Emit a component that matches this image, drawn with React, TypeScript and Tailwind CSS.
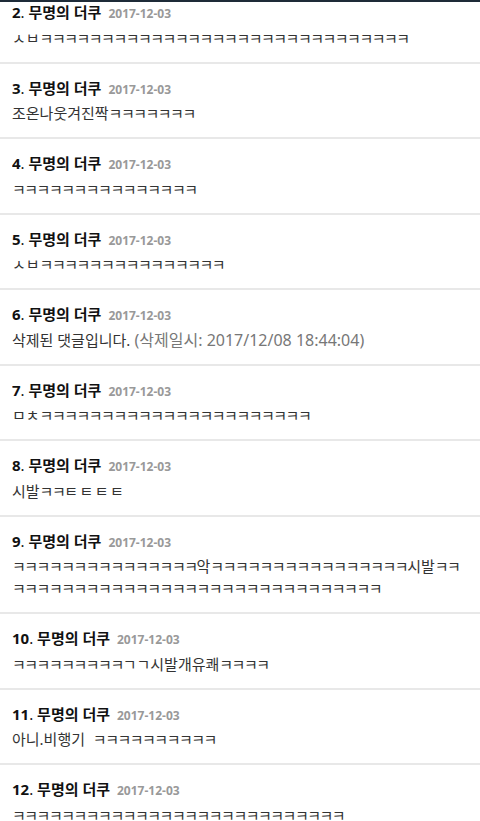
const k = (n: number) => "ㅋ".repeat(n);

const comments = [
  { no: 2, body: "ㅅㅂ" + k(30) },
  { no: 3, body: "조온나웃겨진짝" + k(7) },
  { no: 4, body: k(15) },
  { no: 5, body: "ㅅㅂ" + k(15) },
  { no: 6, body: "삭제된 댓글입니다.", deleted: "(삭제일시: 2017/12/08 18:44:04)" },
  { no: 7, body: "ㅁㅊ" + k(22) },
  { no: 8, body: "시발ㅋㅋㅌㅌㅌㅌ" },
  { no: 9, body: k(15) + "악" + k(16) + "시발ㅋㅋ\n" + k(30) },
  { no: 10, body: k(9) + "ㄱㄱ시발개유쾌" + k(4) },
  { no: 11, body: "아니.비행기  " + k(10) },
  { no: 12, body: k(27) },
];

// jamo widths differ from the original font: ㅋ narrower, ㅌ wider
const renderBody = (text: string) =>
  text.split(/(ㅋ+|ㅌ+)/).map((part, i) =>
    part.startsWith("ㅋ") ? (
      <span key={i} className="tracking-[-1.5px]">
        {part}
      </span>
    ) : part.startsWith("ㅌ") ? (
      <span key={i} className="tracking-[1.5px]">
        {part}
      </span>
    ) : (
      part
    )
  );

export default function App() {
  return (
    <div
      className="h-[821px] w-[480px] overflow-hidden bg-white"
      style={{ fontFamily: '"Noto Sans", "Noto Sans CJK KR", sans-serif' }}
    >
      <div className="h-[2px] bg-[#1e2b38]"></div>
      <ul className="-mt-[14px]">
        {comments.map((c) => (
          <li key={c.no} className="border-b-2 border-[#e8e8e8] px-3 pt-[12px] pb-[13px]">
            <div className="flex h-[24px] items-baseline overflow-hidden leading-[24px]">
              <span className="text-[15px] text-[#111]">
                <b>{c.no}</b>. <b>무명의 더쿠</b>
              </span>
              <span
                className="ml-[7px] text-[12px] font-bold text-[#999]"
                style={{ fontFamily: '"Open Sans", sans-serif' }}
              >
                2017-12-03
              </span>
            </div>
            <p className="mt-[2.5px] whitespace-pre-wrap break-all text-[15px] leading-[22px] text-[#333]">
              {renderBody(c.body)}
              {c.deleted && <span className="text-[16px] text-[#777]"> {c.deleted}</span>}
            </p>
          </li>
        ))}
      </ul>
    </div>
  );
}
